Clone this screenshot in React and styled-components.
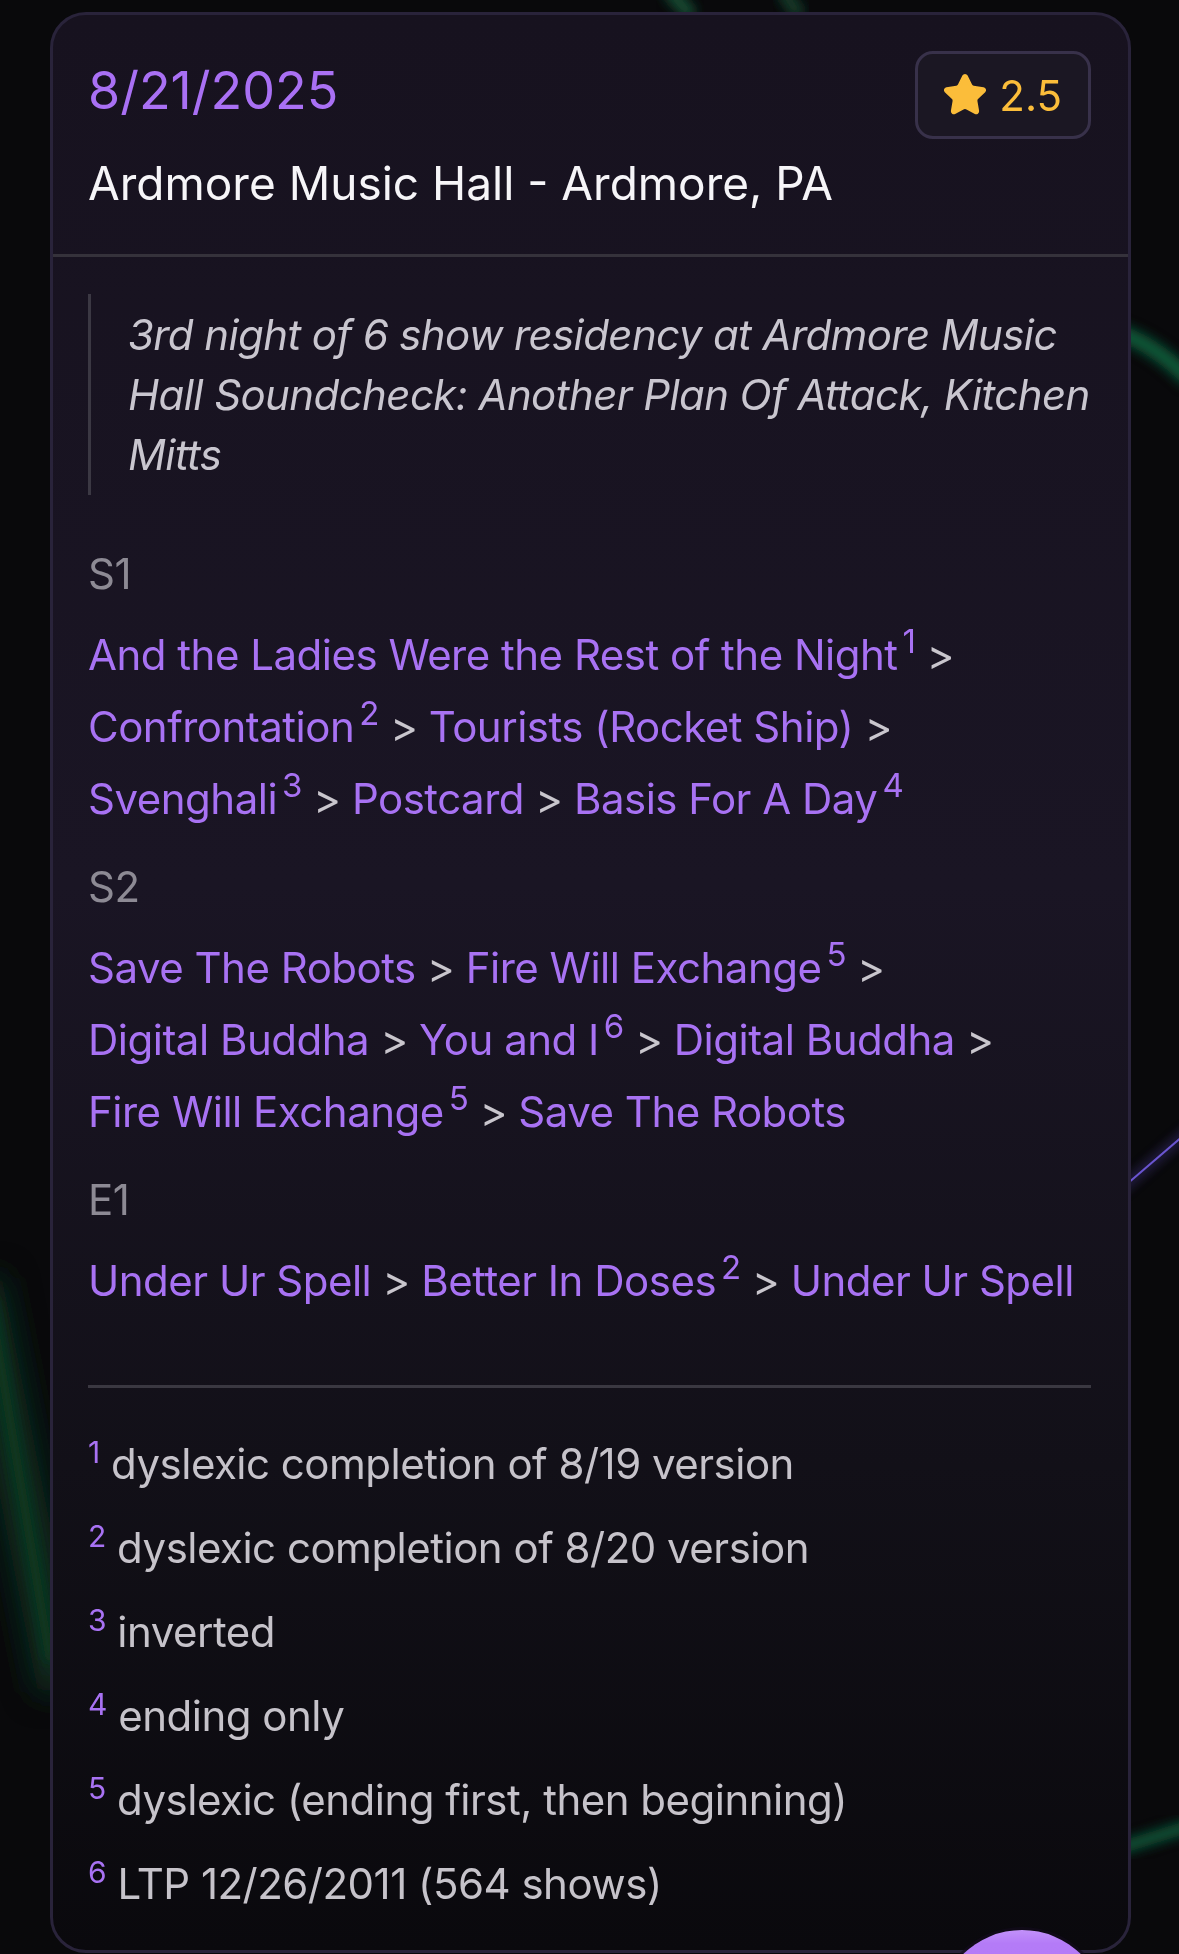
import styled, { createGlobalStyle } from "styled-components";
import { Star } from "lucide-react";

const GlobalStyle = createGlobalStyle`
  html, body {
    margin: 0;
    padding: 0;
    background: #09090b;
  }
  body {
    font-family: "Inter", "Liberation Sans", sans-serif;
    -webkit-font-smoothing: antialiased;
  }
  * { box-sizing: border-box; }
`;

const Page = styled.div`
  min-height: 1954px;
  padding: 12px 48px 0 50px;
`;

const BgArt = styled.svg`
  position: fixed;
  inset: 0;
  width: 100%;
  height: 100%;
  z-index: 0;
  pointer-events: none;
`;

const Card = styled.article`
  position: relative;
  z-index: 1;
  border: 3px solid #29233a;
  border-radius: 36px;
  background: linear-gradient(180deg, #17121f 0%, #1a1524 45%, #121018 75%, #0a090d 100%);
  overflow: hidden;
`;

const Header = styled.header`
  display: flex;
  justify-content: space-between;
  align-items: flex-start;
  padding: 36px 37px 41px 35px;
  border-bottom: 3px solid #35323b;
`;

const TitleBlock = styled.div`
  display: flex;
  flex-direction: column;
`;

const ShowDate = styled.h1`
  margin: 0;
  font-size: 52px;
  line-height: 80px;
  font-weight: 400;
  color: #a970f4;
`;

const Venue = styled.h2`
  margin: 22px 0 0;
  font-size: 46px;
  line-height: 60px;
  font-weight: 400;
  color: #f6f5f8;
`;

const RatingBadge = styled.div`
  display: inline-flex;
  align-items: center;
  gap: 11px;
  height: 88px;
  padding: 0 26px 0 24px;
  border: 3px solid #38314a;
  border-radius: 18px;
  background: #1b1723;
  color: #fbbd3a;
  font-size: 42px;
`;

const Body = styled.section`
  padding: 37px 37px 36px 35px;
  letter-spacing: -0.5px;
`;

const Notes = styled.blockquote`
  margin: 0;
  padding: 11px 0 10px 37px;
  border-left: 3px solid #3b3843;
  font-size: 42px;
  line-height: 60px;
  font-style: italic;
  letter-spacing: -0.6px;
  color: #c9c6cf;
`;

const Sets = styled.div`
  display: flex;
  flex-direction: column;
  gap: 22px;
  margin-top: 49px;
`;

const SetLabel = styled.div`
  font-size: 42px;
  line-height: 60px;
  color: #8d8a94;
  margin-bottom: 15px;
`;

const SongLine = styled.p`
  margin: 0;
  font-size: 42px;
  line-height: 72px;
  color: #c9c6cd;
`;

const SongItem = styled.span`
  white-space: nowrap;
`;

const Song = styled.a`
  color: #a872f3;
  text-decoration: none;
`;

const Mark = styled.sup`
  font-size: ${(p) => p.$size}px;
  line-height: 0;
  vertical-align: baseline;
  position: relative;
  top: -${(p) => p.$raise}px;
  margin-left: ${(p) => p.$gap}px;
  color: #a872f3;
`;

const Divider = styled.hr`
  margin: 68px 0 0;
  border: 0;
  height: 3px;
  background: #3a3841;
`;

const FootnoteList = styled.ol`
  list-style: none;
  margin: 46px 0 0;
  padding: 0;
  display: flex;
  flex-direction: column;
  gap: 24px;
`;

const Footnote = styled.li`
  font-size: 42px;
  line-height: 60px;
  color: #c6c3ca;
`;

const Fab = styled.button`
  position: fixed;
  right: 73px;
  bottom: -144px;
  width: 168px;
  height: 168px;
  border-radius: 50%;
  border: 0;
  background: linear-gradient(180deg, #c291fa 0%, #b47bf7 8%, #b078f5 100%);
  box-shadow: 0 0 0 3px rgba(20, 12, 30, 0.6);
  z-index: 2;
`;

const sets = [
  {
    label: "S1",
    songs: [
      ["And the Ladies Were the Rest of the Night", 1],
      ["Confrontation", 2],
      ["Tourists (Rocket Ship)"],
      ["Svenghali", 3],
      ["Postcard"],
      ["Basis For A Day", 4],
    ],
  },
  {
    label: "S2",
    songs: [
      ["Save The Robots"],
      ["Fire Will Exchange", 5],
      ["Digital Buddha"],
      ["You and I", 6],
      ["Digital Buddha"],
      ["Fire Will Exchange", 5],
      ["Save The Robots"],
    ],
  },
  {
    label: "E1",
    songs: [["Under Ur Spell"], ["Better In Doses", 2], ["Under Ur Spell"]],
  },
];

const footnotes = [
  "dyslexic completion of 8/19 version",
  "dyslexic completion of 8/20 version",
  "inverted",
  "ending only",
  "dyslexic (ending first, then beginning)",
  "LTP 12/26/2011 (564 shows)",
];

function Background() {
  return (
    <BgArt viewBox="0 0 1179 1954" preserveAspectRatio="none">
      <defs>
        <filter id="soft" x="-50%" y="-50%" width="200%" height="200%">
          <feGaussianBlur stdDeviation="6" />
        </filter>
        <filter id="wide" x="-50%" y="-50%" width="200%" height="200%">
          <feGaussianBlur stdDeviation="16" />
        </filter>
      </defs>
      <path d="M668 -10 L692 16" stroke="#174f36" strokeWidth="14" filter="url(#soft)" />
      <path d="M782 -10 L800 16" stroke="#123d2c" strokeWidth="14" filter="url(#soft)" />
      <path d="M1110 330 Q1150 340 1190 380" stroke="#0f5c3b" strokeWidth="16" fill="none" filter="url(#soft)" />
      <path d="M1120 1190 L1190 1130" stroke="#5a46b8" strokeWidth="3" filter="url(#soft)" />
      <path d="M1120 1190 L1190 1130" stroke="#6a55d0" strokeWidth="2" />
      <path d="M1120 1848 L1190 1826" stroke="#0d5a3a" strokeWidth="12" filter="url(#soft)" />
      <path d="M-20 1280 L60 1690" stroke="#0a3322" strokeWidth="44" filter="url(#wide)" />
      <path d="M-10 1300 L50 1660" stroke="#0c3a24" strokeWidth="10" filter="url(#soft)" />
    </BgArt>
  );
}

export default function App() {
  return (
    <Page>
      <GlobalStyle />
      <Background />
      <Card>
        <Header>
          <TitleBlock>
            <ShowDate>8/21/2025</ShowDate>
            <Venue>Ardmore Music Hall - Ardmore, PA</Venue>
          </TitleBlock>
          <RatingBadge>
            <Star size={46} fill="#fbbd3a" color="#fbbd3a" strokeWidth={2} />
            <span>2.5</span>
          </RatingBadge>
        </Header>

        <Body>
          <Notes>
            3rd night of 6 show residency at Ardmore Music Hall Soundcheck:
            Another Plan Of Attack, Kitchen Mitts
          </Notes>

          <Sets>
            {sets.map((set) => (
              <div key={set.label}>
                <SetLabel>{set.label}</SetLabel>
                <SongLine>
                  {set.songs.map(([title, note], i) => (
                    <span key={i}>
                      <SongItem>
                        <Song href="#">{title}</Song>
                        {note && (
                          <Mark $size={33} $raise={17} $gap={5}>
                            {note}
                          </Mark>
                        )}
                        {i < set.songs.length - 1 && "\u00a0>"}
                      </SongItem>
                      {i < set.songs.length - 1 && " "}
                    </span>
                  ))}
                </SongLine>
              </div>
            ))}
          </Sets>

          <Divider />

          <FootnoteList>
            {footnotes.map((text, i) => (
              <Footnote key={i}>
                <Mark $size={30} $raise={16} $gap={0}>
                  {i + 1}
                </Mark>{" "}
                {text}
              </Footnote>
            ))}
          </FootnoteList>
        </Body>
      </Card>
      <Fab aria-label="Add" />
    </Page>
  );
}
